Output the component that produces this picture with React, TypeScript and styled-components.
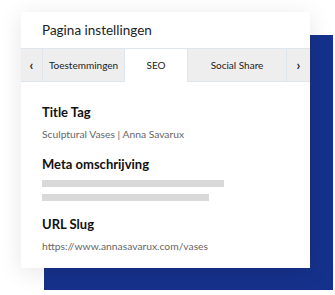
import React from "react";
import styled, { createGlobalStyle } from "styled-components";

const GlobalStyle = createGlobalStyle`
  body {
    margin: 0;
    background: #ffffff;
    font-family: "Lato", "Noto Sans", sans-serif;
  }
`;

const tabs = [
  { label: "‹", width: 22, arrow: true },
  { label: "Toestemmingen", width: 82 },
  { label: "SEO", width: 63, active: true },
  { label: "Social Share", width: 99 },
  { label: "›", width: 23, arrow: true },
];

const App = () => {
  return (
    <Stage>
      <GlobalStyle />
      <Backdrop />
      <Card>
        <Header>Pagina instellingen</Header>
        <TabRow>
          {tabs.map((t) => (
            <Tab key={t.label} $width={t.width} $active={!!t.active} $arrow={!!t.arrow}>
              {t.label}
            </Tab>
          ))}
        </TabRow>
        <Content>
          <Label>Title Tag</Label>
          <Value>Sculptural Vases | Anna Savarux</Value>
          <Label $spaced>Meta omschrijving</Label>
          <Lines>
            <Line $width={182} />
            <Line $width={167} />
          </Lines>
          <Label $spaced>URL Slug</Label>
          <Value>https://www.annasavarux.com/vases</Value>
        </Content>
      </Card>
    </Stage>
  );
};

const Stage = styled.div`
  display: grid;
  padding: 12px 0 0 21px;
  width: 312px;
`;

const Backdrop = styled.div`
  grid-area: 1 / 1;
  margin: 23px 0 0 23px;
  width: 289px;
  height: 255px;
  background: #15318b;
`;

const Card = styled.div`
  grid-area: 1 / 1;
  width: 289px;
  height: 256px;
  background: #ffffff;
  box-shadow: 0 4px 22px rgba(0, 0, 0, 0.1);
  display: flex;
  flex-direction: column;
  position: relative;
`;

const Header = styled.div`
  height: 36px;
  display: flex;
  align-items: center;
  padding-left: 21px;
  font-size: 13.5px;
  color: #222;
`;

const TabRow = styled.div`
  display: flex;
  height: 34px;
  border-top: 1px solid #dfe5ec;
  box-sizing: border-box;
`;

const Tab = styled.div<{ $width: number; $active: boolean; $arrow: boolean }>`
  width: ${(p) => p.$width}px;
  box-sizing: border-box;
  display: flex;
  align-items: center;
  justify-content: center;
  font-size: ${(p) => (p.$arrow ? "13px" : "10px")};
  font-weight: ${(p) => (p.$arrow ? 700 : 400)};
  color: #222;
  background: ${(p) => (p.$active ? "#ffffff" : "#eeeeee")};
  border-right: 1px solid #dfe5ec;
  border-bottom: ${(p) => (p.$active ? "none" : "1px solid #dfe5ec")};
  padding-bottom: 1px;
  &:last-child {
    border-right: none;
  }
`;

const Content = styled.div`
  padding: 21px 21px 0;
  display: flex;
  flex-direction: column;
`;

const Label = styled.div<{ $spaced?: boolean }>`
  font-size: 13px;
  font-weight: 700;
  color: #111;
  line-height: 18px;
  margin-top: ${(p) => (p.$spaced ? "14px" : "0")};
`;

const Value = styled.div`
  font-size: 10.3px;
  color: #666;
  line-height: 13px;
  margin-top: 7px;
`;

const Lines = styled.div`
  display: flex;
  flex-direction: column;
  gap: 7px;
  margin-top: 7px;
`;

const Line = styled.div<{ $width: number }>`
  width: ${(p) => p.$width}px;
  height: 7px;
  background: #d9d9d9;
`;

export default App;
